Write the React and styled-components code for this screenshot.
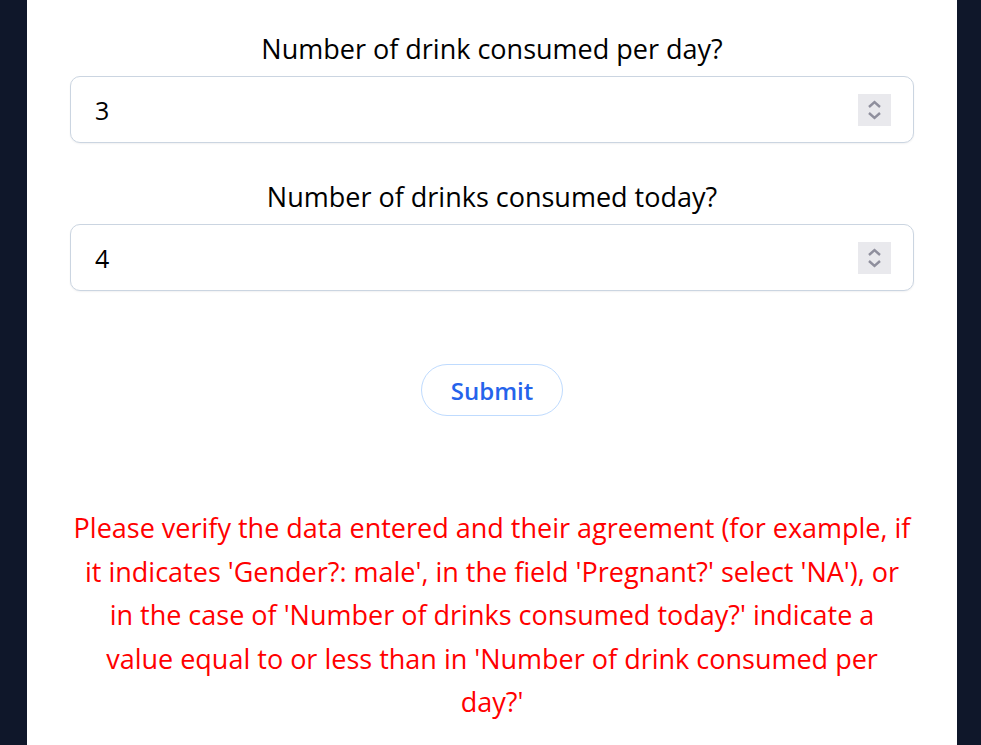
import React from "react";
import styled, { createGlobalStyle } from "styled-components";

const Global = createGlobalStyle`
  html, body { margin: 0; padding: 0; background: #0f172a; }
  body { font-family: "Open Sans", "Noto Sans", sans-serif; }
  * { box-sizing: border-box; }
`;

const Page = styled.div`
  min-height: 745px;
  display: flex;
  justify-content: center;
  padding: 0 24px 0 27px;
`;

const Panel = styled.div`
  width: 930px;
  min-height: 745px;
  background: #ffffff;
  padding: 29px 43px 0 43px;
  display: flex;
  flex-direction: column;
`;

const Field = styled.div`
  display: flex;
  flex-direction: column;
  align-items: stretch;
  margin-bottom: ${(p) => p.$mb || 0}px;
`;

const Label = styled.label`
  font-size: 27px;
  line-height: 40px;
  color: #000;
  text-align: center;
  margin-bottom: 7px;
`;

const InputWrap = styled.div`
  position: relative;
  height: 67px;
`;

const Input = styled.input`
  width: 100%;
  height: 100%;
  border: 1px solid #cbd5e1;
  border-radius: 10px;
  box-shadow: 0 1px 2px rgba(15, 23, 42, 0.06);
  padding: 0 24px;
  font-family: inherit;
  font-size: 25px;
  color: #000;
  background: #fff;
  outline: none;
`;

const Spinner = styled.div`
  position: absolute;
  right: 23px;
  top: 50%;
  transform: translateY(-50%);
  width: 33px;
  height: 32px;
  background: #e9e9ed;
  display: flex;
  align-items: center;
  justify-content: center;
`;

const ButtonRow = styled.div`
  display: flex;
  justify-content: center;
  margin-top: 73px;
`;

const Button = styled.button`
  width: 142px;
  height: 52px;
  border-radius: 26px;
  border: 1.5px solid #bfdbfe;
  background: #fff;
  color: #2563eb;
  font-family: inherit;
  font-size: 24px;
  font-weight: 600;
  cursor: pointer;
`;

const Error = styled.p`
  margin: 90px 0 0 0;
  color: #ff0000;
  font-size: 27px;
  line-height: 43.5px;
  text-align: center;
`;

function SpinIcon() {
  return (
    <svg width="33" height="32" viewBox="0 0 33 32">
      <path d="M11 13 L16.5 8 L22 13" fill="none" stroke="#8f8f9d" strokeWidth="2.4" />
      <path d="M11 19 L16.5 24 L22 19" fill="none" stroke="#8f8f9d" strokeWidth="2.4" />
    </svg>
  );
}

function NumberField({ label, value, mb }) {
  return (
    <Field $mb={mb}>
      <Label>{label}</Label>
      <InputWrap>
        <Input type="text" defaultValue={value} />
        <Spinner>
          <SpinIcon />
        </Spinner>
      </InputWrap>
    </Field>
  );
}

export default function App() {
  return (
    <>
      <Global />
      <Page>
        <Panel>
          <NumberField label="Number of drink consumed per day?" value="3" mb={34} />
          <NumberField label="Number of drinks consumed today?" value="4" />
          <ButtonRow>
            <Button>Submit</Button>
          </ButtonRow>
          <Error>
            Please verify the data entered and their agreement (for example, if
            <br />
            it indicates 'Gender?: male', in the field 'Pregnant?' select 'NA'), or
            <br />
            in the case of 'Number of drinks consumed today?' indicate a
            <br />
            value equal to or less than in 'Number of drink consumed per
            <br />
            day?'
          </Error>
        </Panel>
      </Page>
    </>
  );
}
